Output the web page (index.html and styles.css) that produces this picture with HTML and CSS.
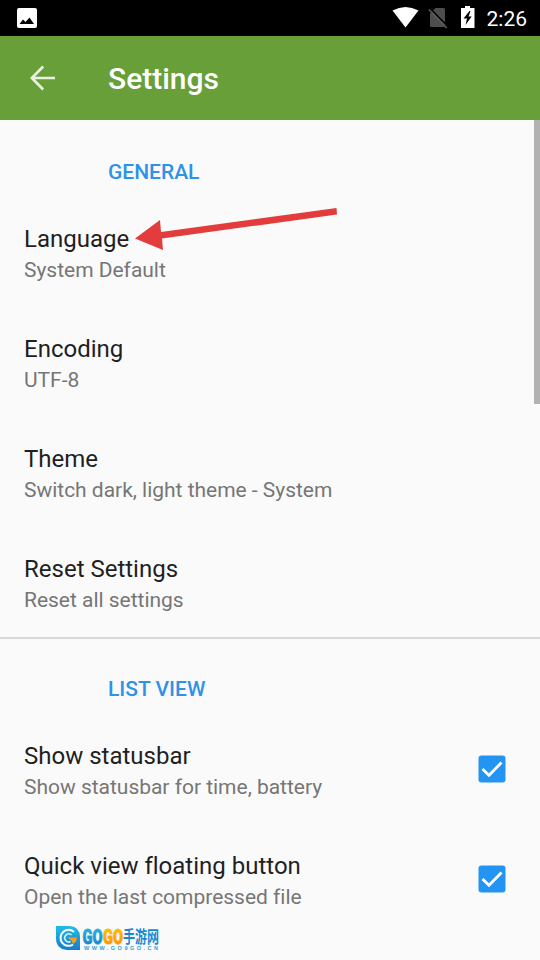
FILE: index.html
```html
<!DOCTYPE html>
<html lang="en">
<head>
    <meta charset="UTF-8">
    <meta name="viewport" content="width=device-width, initial-scale=1.0">
    <title>Settings</title>
    <link rel="stylesheet" href="styles.css">
</head>
<body>
    <div class="status-bar">
        <svg class="picture-icon" width="20" height="20" viewBox="0 0 20 20">
            <rect width="20" height="20" rx="2" fill="#fff"/>
            <path d="M2.5 16 L6 11.5 L8.5 14 L12.5 9.5 L17 16 Z" fill="#000"/>
        </svg>
        <svg class="status-icons" width="90" height="24" viewBox="0 0 90 24">
            <path d="M.5 4.5 Q13.5 -2.5 26.5 4.5 L13.5 21.5 Z" fill="#fff"/>
            <path d="M43.5 2 H51.5 Q53 2 53 3.5 V21 H39.5 Q38 21 38 19.5 V7.5 Z" fill="#4d4d4d"/>
            <path d="M38.300 2.500 L56.300 21" stroke="#000" stroke-width="1.500"/>
            <path d="M36.800 3.500 L54.800 22" stroke="#5a5a5a" stroke-width="1.700"/>
            <path d="M73 0 H78 V2 H82.5 V22 H69 V2 H73 Z" fill="#fff"/>
            <path d="M77.5 5 L71.500 12.500 H75 L73.500 19 L79.700 10.500 H76.500 L78.500 5 Z" fill="#000"/>
        </svg>
        <span class="clock">2:26</span>
    </div>

    <div class="toolbar">
        <svg class="back" width="26" height="26" viewBox="0 0 26 26">
            <path d="M25 13 H2 M13.2 1.5 L1.8 13 L13.2 24.5" fill="none" stroke="#e9f1e2" stroke-width="2.7"/>
        </svg>
        <h1>Settings</h1>
    </div>

    <div class="settings">
        <h2>GENERAL</h2>
        <div class="item">
            <div class="item-text">
                <div class="item-title">Language</div>
                <div class="item-summary">System Default</div>
            </div>
            <svg class="arrow" width="204" height="46" viewBox="0 0 204 46">
                <path d="M1 33.5 L26 15 L27 27 L202.5 3 L203 9.5 L28 33.5 L29 45 Z" fill="#e33c3c"/>
            </svg>
        </div>
        <div class="item">
            <div class="item-text">
                <div class="item-title">Encoding</div>
                <div class="item-summary">UTF-8</div>
            </div>
        </div>
        <div class="item">
            <div class="item-text">
                <div class="item-title">Theme</div>
                <div class="item-summary">Switch dark, light theme - System</div>
            </div>
        </div>
        <div class="item">
            <div class="item-text">
                <div class="item-title">Reset Settings</div>
                <div class="item-summary">Reset all settings</div>
            </div>
        </div>

        <h2 class="divided">LIST VIEW</h2>
        <div class="item">
            <div class="item-text">
                <div class="item-title">Show statusbar</div>
                <div class="item-summary">Show statusbar for time, battery</div>
            </div>
            <svg class="checkbox" width="28" height="28" viewBox="0 0 28 28">
                <rect x=".5" y=".5" width="27" height="27" rx="3" fill="#2494f3"/>
                <path d="M4.5 14 L11 20.2 L23.5 7.5" fill="none" stroke="#fff" stroke-width="2.8"/>
            </svg>
        </div>
        <div class="item">
            <div class="item-text">
                <div class="item-title">Quick view floating button</div>
                <div class="item-summary">Open the last compressed file</div>
            </div>
            <svg class="checkbox" width="28" height="28" viewBox="0 0 28 28">
                <rect x=".5" y=".5" width="27" height="27" rx="3" fill="#2494f3"/>
                <path d="M4.5 14 L11 20.2 L23.5 7.5" fill="none" stroke="#fff" stroke-width="2.8"/>
            </svg>
        </div>
        <div class="scrollbar"></div>
    </div>

    <svg class="watermark" width="110" height="30" viewBox="0 0 110 30">
        <defs>
            <linearGradient id="blue" x1="0" y1="0" x2="0" y2="1">
                <stop offset="0" stop-color="#22bce8"/>
                <stop offset="1" stop-color="#167ccc"/>
            </linearGradient>
            <linearGradient id="orange" x1="0" y1="0" x2="0" y2="1">
                <stop offset="0" stop-color="#ffc800"/>
                <stop offset="1" stop-color="#ff8a00"/>
            </linearGradient>
        </defs>
        <path d="M1 2 H15 Q25 3 25 13 V26 H12 Q1 25 1 14 Z" fill="url(#blue)"/>
        <path d="M19 8 A8 8 0 1 0 18 20.500" fill="none" stroke="#fff" stroke-width="2"/>
        <path d="M16.500 11 A4 4 0 1 0 15.500 17.500" fill="none" stroke="#d9f2fb" stroke-width="1.6"/>
        <path d="M12.500 13.500 H22 Q21.500 18 18 20 L16.500 16.500 Z" fill="#ff9c16"/>
        <text class="logo" x="27.5" y="19.500" textLength="20" lengthAdjust="spacingAndGlyphs" fill="url(#blue)" stroke="url(#blue)">GO</text>
        <text class="logo" x="48" y="19.500" textLength="20" lengthAdjust="spacingAndGlyphs" fill="url(#orange)" stroke="url(#orange)">GO</text>
        <text class="logo-cjk" x="68" y="18.500" textLength="36" lengthAdjust="spacingAndGlyphs" fill="#1689d3">手游网</text>
        <text class="logo-url" x="29" y="26" textLength="74">WWW.GO9GO.CN</text>
    </svg>
</body>
</html>
```
FILE: styles.css
```css
* { box-sizing: border-box; }
body { margin: 0; height: 960px; overflow: hidden; position: relative; background: #fafafa; font-family: Roboto, "Noto Sans", sans-serif; font-variant-ligatures: none; }
h1, h2 { margin: 0; font-weight: 500; }
svg { display: block; flex: none; }

.status-bar { display: flex; align-items: center; height: 36px; padding: 0 13px 0 17px; background: #000; color: #fff; }
.status-icons { margin-left: auto; margin-right: 5px; margin-bottom: 1px; }
.clock { font-size: 21px; line-height: 24px; margin-top: 2px; }

.toolbar { display: flex; align-items: center; height: 84px; padding-left: 30px; background: #689f38; color: #fff; }
.toolbar h1 { margin-left: 52px; padding-top: 2px; font-size: 30px; line-height: 36px; }

.settings { position: relative; height: 840px; overflow: hidden; }
.settings h2 { height: 77px; padding: 40px 0 0 108px; color: #2e93e6; font-size: 21px; line-height: 25px; }
.settings .divided { padding-top: 38px; border-top: 2px solid #d9d9d9; }

.item { position: relative; display: flex; justify-content: space-between; height: 110px; padding: 28px 34px 0 24px; }
.item-title { color: #1f1f1f; font-size: 24px; line-height: 28px; }
.item-summary { margin-top: 5px; color: #767676; font-size: 21px; line-height: 25px; letter-spacing: -0.02px; }
.checkbox { margin-top: 13px; }

/* pointer drawn over the language row */
.arrow { position: absolute; left: 134px; top: 8px; }
.scrollbar { position: absolute; top: 0; right: 0; width: 6px; height: 284px; background: #b2b2b2; }

.watermark { position: absolute; left: 55px; top: 924px; overflow: visible; }
.logo { font: 900 21px Roboto, sans-serif; stroke-width: 0.8px; }
.logo-cjk { font: 700 16.5px "Noto Sans CJK SC", sans-serif; }
.logo-url { font: 700 5.5px "Liberation Sans", sans-serif; fill: #2d9ed8; }
```
